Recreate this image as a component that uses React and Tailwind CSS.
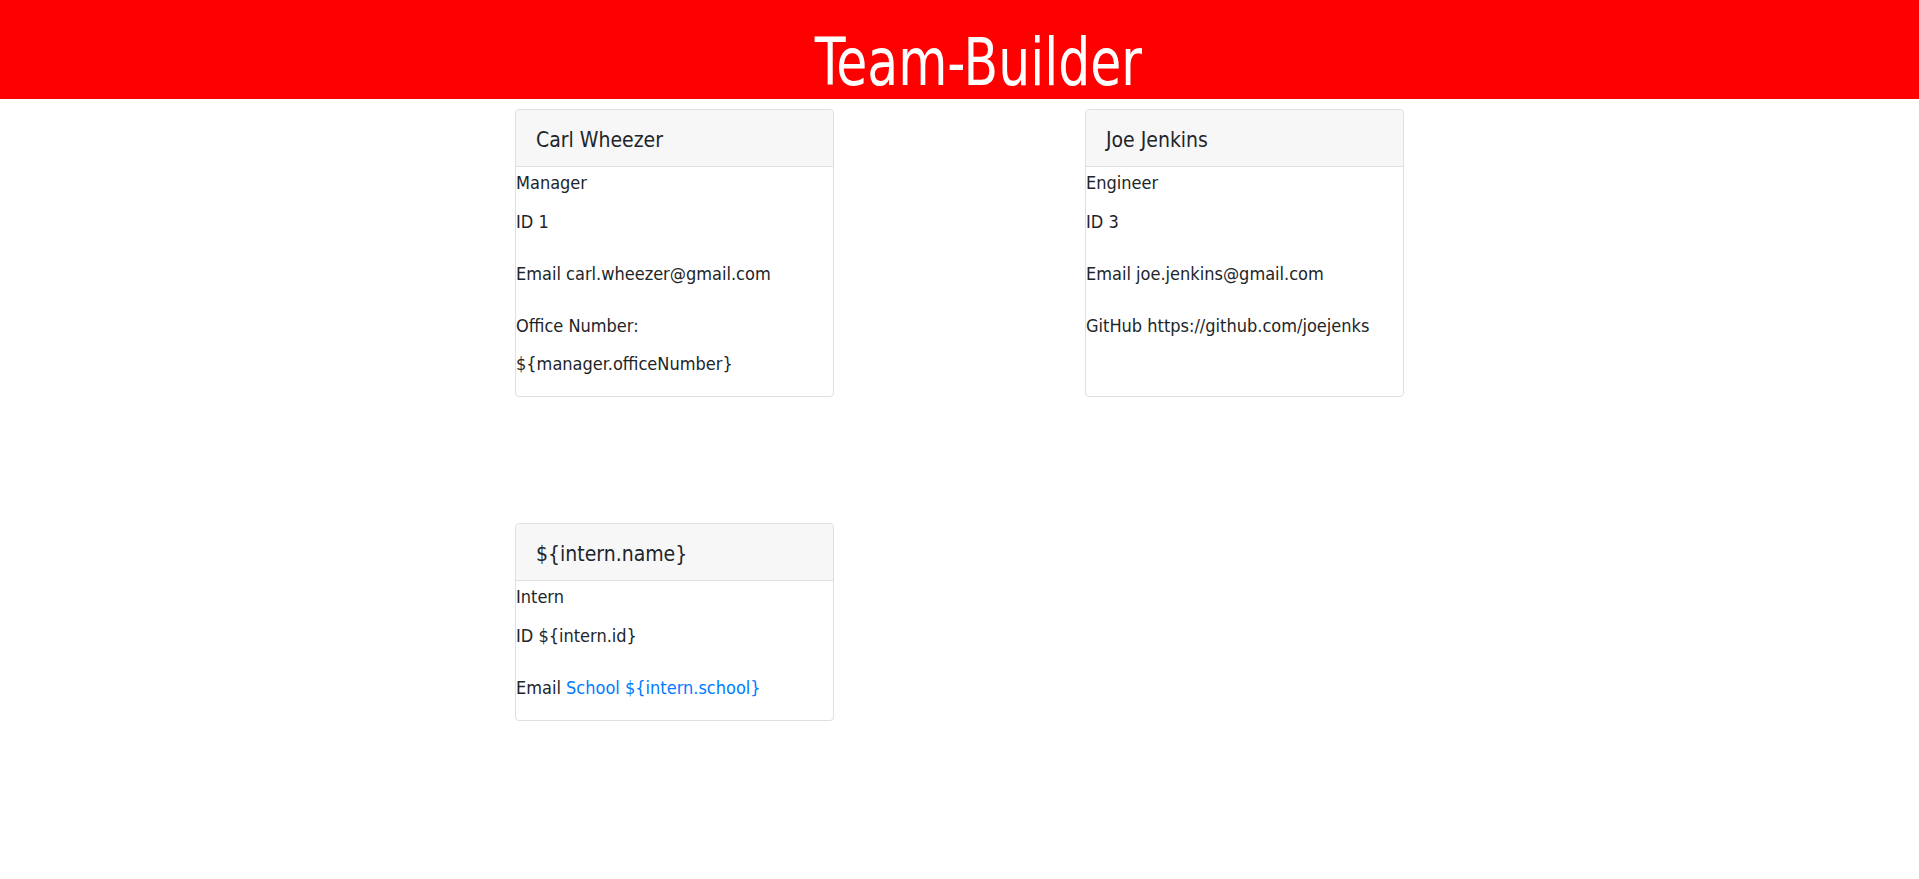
const team = [
  {
    name: 'Carl Wheezer',
    role: 'Manager',
    lines: [
      'ID 1',
      'Email carl.wheezer@gmail.com',
      'Office Number: ${manager.officeNumber}',
    ],
  },
  {
    name: 'Joe Jenkins',
    role: 'Engineer',
    lines: ['ID 3', 'Email joe.jenkins@gmail.com', 'GitHub https://github.com/joejenks'],
  },
  {
    name: '${intern.name}',
    role: 'Intern',
    lines: [
      'ID ${intern.id}',
      <>
        Email <a className="text-[#007bff]">{'School ${intern.school}'}</a>
      </>,
    ],
  },
];

function Card({ member }) {
  return (
    <div className="w-[319px] justify-self-center rounded border border-[#dfdfdf] bg-white flex flex-col">
      <div className="bg-[#f7f7f7] border-b border-[#dfdfdf] px-5 pt-[15px] pb-[10px] text-[21px] leading-[31px] text-[#212529] rounded-t">
        {member.name}
      </div>
      <div className="pt-[1px] text-[18px] leading-[30px] text-[#212529]">{member.role}</div>
      <ul className="pt-[5px] pb-[13px] flex flex-col gap-[14px] text-[18px] leading-[38px] text-[#212529]">
        {member.lines.map((line, i) => (
          <li key={i}>{line}</li>
        ))}
      </ul>
    </div>
  );
}

export default function App() {
  return (
    <div className="min-h-screen bg-white font-['DejaVu_Sans_Condensed','DejaVu_Sans',sans-serif]">
      <header className="h-[99px] bg-[#ff0000] pt-[30px] pl-[38px] text-center">
        <h1 className="inline-block scale-x-[0.85] text-[66px] leading-[66px] text-white">Team-Builder</h1>
      </header>
      <main className="mx-auto w-[1140px] pt-[10px] grid grid-cols-2 gap-y-[126px]">
        {team.map((m) => (
          <Card key={m.name} member={m} />
        ))}
      </main>
    </div>
  );
}
